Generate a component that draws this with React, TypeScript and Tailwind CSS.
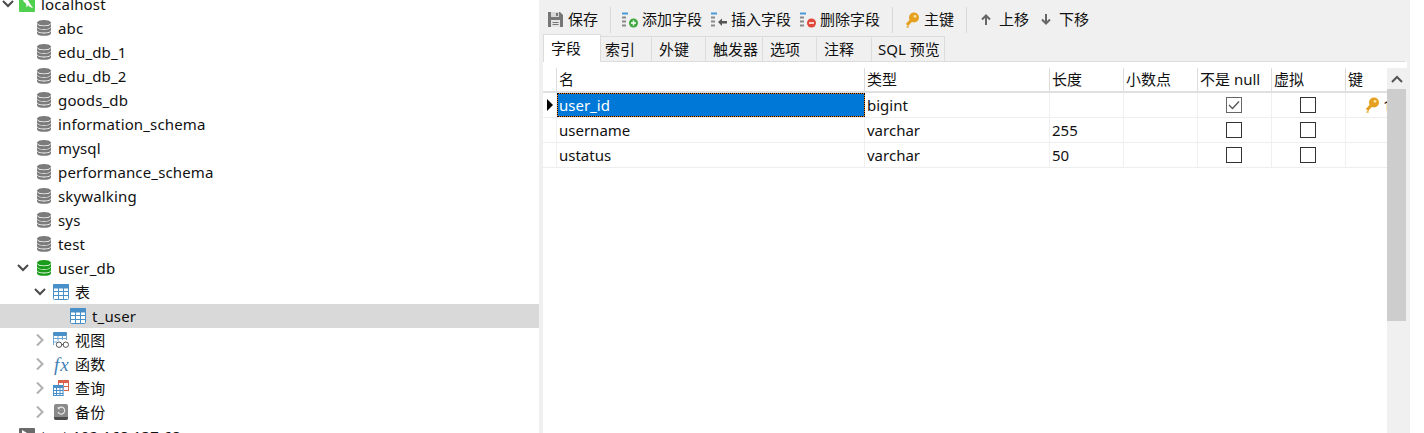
import type { ReactNode } from "react";

const font = "font-['Noto_Sans','Noto_Sans_CJK_SC',sans-serif]";

function Chevron({ open, dark }: { open?: boolean; dark?: boolean }) {
  return (
    <svg width="12" height="12" viewBox="0 0 12 12" fill="none" stroke={dark ? "#4a4a4a" : "#b0b0b0"} strokeWidth="2">
      {open ? <path d="M1 3l5 5 5-5" /> : <path d="M3 .5L8.500 6 3 11.500" />}
    </svg>
  );
}

function DbIcon({ color = "#7b7b7b" }: { color?: string }) {
  return (
    <svg width="16" height="16" viewBox="0 0 16 16" fill={color}>
      <ellipse cx="8" cy="2.800" rx="7" ry="2.800" />
      <path d="M1 3.800C2 5.600 4.500 6.300 8 6.300S14 5.600 15 3.800V6.400C15 8 12 9 8 9S1 8 1 6.400z" />
      <path d="M1 7.300C2 9.100 4.500 9.800 8 9.800S14 9.100 15 7.300V10C15 11.600 12 12.600 8 12.600S1 11.600 1 10z" />
      <path d="M1 10.900C2 12.700 4.500 13.400 8 13.400S14 12.700 15 10.900V13.200C15 14.800 12 15.800 8 15.800S1 14.800 1 13.200z" />
    </svg>
  );
}

function TableIcon() {
  return (
    <svg width="16" height="16" viewBox="0 0 16 16">
      <rect x="0.500" y="0.500" width="15" height="15" rx="1" fill="#fff" stroke="#4a90c8" />
      <rect x="0" y="0" width="16" height="4.500" rx="1" fill="#4a90c8" />
      <path d="M5.500 4v11M10.500 4v11M1 7.500h14M1 11.500h14" stroke="#4a90c8" fill="none" />
    </svg>
  );
}

function ViewIcon() {
  return (
    <svg width="16" height="16" viewBox="0 0 16 16">
      <rect x="0" y="0" width="14" height="4" rx="1" fill="#4a90c8" />
      <path d="M0.500 4v9M5 4v5M9.500 4v4M13.500 4v4M0 6.500h14M0 10h4" stroke="#6fa8d6" fill="none" />
      <circle cx="6" cy="12.700" r="2.700" fill="#fff" stroke="#555" />
      <circle cx="12.800" cy="12.700" r="2.700" fill="#fff" stroke="#555" />
      <path d="M8.500 12.500h2" stroke="#555" />
    </svg>
  );
}

function FxIcon() {
  return <span className="ml-px font-['Liberation_Serif',serif] text-[19px] leading-none tracking-[1px] text-[#3f7fb5] italic">fx</span>;
}

function QueryIcon() {
  return (
    <svg width="16" height="16" viewBox="0 0 16 16" fill="none">
      <rect x="5" y="0" width="11" height="3" fill="#d9634a" />
      <path d="M5.500 1v8M10.500 2v8M15.500 1v10M8 6.500h8M11 10.500h5" stroke="#d9634a" />
      <rect x="0" y="5" width="10.500" height="11" fill="#fff" />
      <rect x="0" y="5" width="10.500" height="3" fill="#4a90c8" />
      <path d="M0.500 6v10M3.500 7v9M7 7v9M10 6v10M0 10.500h10.500M0 13.500h10.500M0 15.500h10.500" stroke="#4a90c8" />
    </svg>
  );
}

function BackupIcon() {
  return (
    <svg width="14" height="16" viewBox="0 0 14 16" fill="none" className="ml-px">
      <rect x="0" y="0" width="14" height="16" rx="2" fill="#8a8a8a" />
      <path d="M0 13h14v1a2 2 0 0 1-2 2H2a2 2 0 0 1-2-2z" fill="#4d4d4d" />
      <path d="M4.200 4.800A3.500 3.500 0 1 1 4 8" stroke="#e8e8e8" strokeWidth="1.100" />
      <path d="M3 3.500h2.500V6z" fill="#e8e8e8" />
    </svg>
  );
}

function ServerIcon() {
  return (
    <svg width="16" height="16" viewBox="0 0 16 16">
      <rect width="16" height="16" rx="1" fill="#6a6a6a" />
      <path d="M3 2l5 3-5 3z" fill="#fff" />
    </svg>
  );
}

function ConnIcon() {
  return (
    <svg width="16" height="16" viewBox="0 0 16 16">
      <rect width="16" height="16" rx="1" fill="#4fd04f" />
      <path d="M3 1c3-.5 5 1 6.500 4 1 2 2.500 4 4.500 7-2.500-.5-4-1.500-5-3-.5 1.500-1 2-1.500 2.500C7.500 9 7 8 6.500 7 5 6.500 3.500 4 3 1z" fill="#fff" />
    </svg>
  );
}

type Row = { label: string; indent: string; icon: ReactNode; chevron?: "open" | "closed"; selected?: boolean };

const closedChevron = "closed" as const;
const dbNames = ["abc", "edu_db_1", "edu_db_2", "goods_db", "information_schema", "mysql", "performance_schema", "skywalking", "sys", "test"];

const treeRows: Row[] = [
  { label: "localhost", indent: "pl-0", icon: <ConnIcon />, chevron: "open" },
  ...dbNames.map((label) => ({ label, indent: "pl-[17px]", icon: <DbIcon /> })),
  { label: "user_db", indent: "pl-[17px]", icon: <DbIcon color="#1a9c1a" />, chevron: "open" },
  { label: "表", indent: "pl-[34px]", icon: <TableIcon />, chevron: "open" },
  { label: "t_user", indent: "pl-[51px]", icon: <TableIcon />, selected: true },
  { label: "视图", indent: "pl-[34px]", icon: <ViewIcon />, chevron: closedChevron },
  { label: "函数", indent: "pl-[34px]", icon: <FxIcon />, chevron: closedChevron },
  { label: "查询", indent: "pl-[34px]", icon: <QueryIcon />, chevron: closedChevron },
  { label: "备份", indent: "pl-[34px]", icon: <BackupIcon />, chevron: closedChevron },
  { label: "test 192.168.137.68", indent: "pl-0", icon: <ServerIcon /> },
];

function TreeRow({ row }: { row: Row }) {
  return (
    <div className={`flex h-6 shrink-0 items-center ${row.indent} ${row.selected ? "bg-[#d9d9d9]" : ""}`}>
      <span className={`flex w-[19px] shrink-0 justify-start ${row.indent === "pl-0" ? "pl-[2px]" : ""}`}>
        {row.chevron && <Chevron open={row.chevron === "open"} dark={row.chevron === "open"} />}
      </span>
      <span className="flex w-[22px] shrink-0 items-center justify-start">{row.icon}</span>
      <span className="whitespace-nowrap">{row.label}</span>
    </div>
  );
}

function ListIcon({ badge }: { badge: ReactNode }) {
  return (
    <svg width="16" height="16" viewBox="0 0 16 16" fill="none">
      <path d="M0 1.500h6" stroke="#4a9ad9" strokeWidth="2" />
      <path d="M0 5.500h4M0 9.500h4M0 13.500h4" stroke="#8a8a8a" strokeWidth="2" />
      {badge}
    </svg>
  );
}

const addIcon = (
  <ListIcon
    badge={
      <>
        <circle cx="11.500" cy="11" r="4.500" fill="#3fa83f" />
        <path d="M9 11h5M11.500 8.500v5" stroke="#fff" strokeWidth="1.500" />
      </>
    }
  />
);
const insertIcon = <ListIcon badge={<path d="M7 10l4-3.500V9h5v2.500h-5V14z" fill="#555" />} />;
const deleteIcon = (
  <ListIcon
    badge={
      <>
        <circle cx="11.500" cy="11" r="4.500" fill="#e2483a" />
        <path d="M9 11h5" stroke="#fff" strokeWidth="1.500" />
      </>
    }
  />
);

function KeyIcon() {
  return (
    <svg width="14" height="16" viewBox="0 0 14 16" fill="none">
      <path d="M6.500 8L2 13" stroke="#e6a020" strokeWidth="3.200" />
      <path d="M1 15.500l2.500.2V13z" fill="#e6a020" />
      <circle cx="9" cy="5.500" r="5" fill="#e6a020" />
      <circle cx="10" cy="4.300" r="1.400" fill="#fbe3a8" />
    </svg>
  );
}

function SaveIcon() {
  return (
    <svg width="15" height="15" viewBox="0 0 15 15">
      <path d="M0 0h12l3 3v12H0z" fill="#767676" />
      <rect x="3" y="0" width="8" height="5" fill="#d8d8d8" />
      <rect x="8" y="1" width="2" height="3" fill="#767676" />
      <rect x="3" y="8" width="9" height="7" fill="#e4e4e4" />
      <path d="M4.500 10.500h6M4.500 12.500h6" stroke="#767676" />
    </svg>
  );
}

function ArrowIcon({ down }: { down?: boolean }) {
  return (
    <svg width="10" height="11" viewBox="0 0 10 11" fill="none" stroke="#666" strokeWidth="2" className={down ? "rotate-180" : ""}>
      <path d="M5 11V2M1 5.500l4-4 4 4" />
    </svg>
  );
}

function Sep() {
  return <div className="h-[26px] w-px bg-[#d9d9d9]" />;
}

function Tool({ icon, label, className }: { icon: ReactNode; label: string; className?: string }) {
  return (
    <div className={`flex items-center whitespace-nowrap ${className ?? ""}`}>
      {icon}
      <span>{label}</span>
    </div>
  );
}

const tabs = [
  { label: "索引", w: "w-[51px] pl-1" },
  { label: "外键", w: "w-[54px] pl-[7px]" },
  { label: "触发器", w: "w-[57px] pl-[7px]" },
  { label: "选项", w: "w-[54px] pl-[7px]" },
  { label: "注释", w: "w-[55px] pl-[7px]" },
  { label: "SQL 预览", w: "w-[73px] pl-[6px]" },
];

const cols = "grid grid-cols-[14px_308px_185px_74px_74px_74px_74px_41px]";
const headers = ["名", "类型", "长度", "小数点", "不是 null", "虚拟", "键"];

function Box({ checked }: { checked?: boolean }) {
  return (
    <div className={`flex h-4 w-4 items-center justify-center border ${checked ? "border-[#666]" : "border-[#333]"}`}>
      {checked && (
        <svg width="12" height="10" viewBox="0 0 12 10" fill="none" stroke="#555" strokeWidth="1.300">
          <path d="M1 5l3.500 3.500L11 1.500" />
        </svg>
      )}
    </div>
  );
}

const fields = [
  { name: "user_id", type: "bigint", len: "", notNull: true, key: true },
  { name: "username", type: "varchar", len: "255" },
  { name: "ustatus", type: "varchar", len: "50" },
];

const cell = "flex items-center overflow-hidden border-r border-[#f0f0f0] pl-[2px]";

export default function App() {
  return (
    <div className={`flex h-[433px] w-[1424px] overflow-hidden bg-white text-[15px] leading-none text-[#111] ${font}`}>
      <div className="-mt-2 flex w-[539px] shrink-0 flex-col overflow-hidden tracking-[0.15px]">
        {treeRows.map((row) => (
          <TreeRow key={row.label} row={row} />
        ))}
      </div>

      <div className="flex w-[871px] shrink-0 flex-col bg-[#f0f0f0]">
        <div className="flex h-[34px] shrink-0 items-center pt-[5px]">
          <Tool icon={<SaveIcon />} label="保存" className="ml-[9px] gap-[5px]" />
          <div className="ml-3"><Sep /></div>
          <Tool icon={addIcon} label="添加字段" className="ml-[11px] gap-1" />
          <Tool icon={insertIcon} label="插入字段" className="ml-[9px] gap-1" />
          <Tool icon={deleteIcon} label="删除字段" className="ml-[9px] gap-1" />
          <div className="ml-3"><Sep /></div>
          <Tool icon={<KeyIcon />} label="主键" className="ml-3 gap-[5px]" />
          <div className="ml-3"><Sep /></div>
          <Tool icon={<ArrowIcon />} label="上移" className="ml-[14px] gap-2" />
          <Tool icon={<ArrowIcon down />} label="下移" className="ml-3 gap-2" />
        </div>

        <div className="mr-[5px] ml-1 flex h-[28px] shrink-0 items-stretch border-b border-[#dcdcdc]">
          <div className="-mb-px flex w-[58px] items-start border border-b-0 border-[#dcdcdc] bg-white pt-[6px] pl-[7px]">字段</div>
          {tabs.map((t) => (
            <div key={t.label} className={`${t.w} mt-[2px] flex items-center border-t border-r border-[#dcdcdc] pt-px whitespace-nowrap`}>
              {t.label}
            </div>
          ))}
        </div>

        <div className="ml-1 flex min-h-0 flex-1">
          <div className="w-[844px] bg-white pt-[6px]">
            <div className={`${cols} h-[25px] border-b-2 border-[#e0e0e0]`}>
              <div className="border-r border-[#dcdcdc]" />
              {headers.map((h) => (
                <div key={h} className="flex items-center overflow-hidden border-r border-[#dcdcdc] pl-[2px] whitespace-nowrap last:border-r-0">
                  {h}
                </div>
              ))}
            </div>
            {fields.map((f, i) => (
              <div key={f.name} className={`${cols} h-[25px] border-b border-[#eeeeee]`}>
                <div className="flex items-center border-r border-[#f0f0f0] pl-1">
                  {i === 0 && <div className="h-0 w-0 border-y-[6px] border-l-[6px] border-y-transparent border-l-black" />}
                </div>
                {i === 0 ? (
                  <div className="bg-[#e8801a]">
                    <div className="flex h-full items-center border border-dotted border-black bg-[#0078d7] bg-clip-padding pl-px text-white">{f.name}</div>
                  </div>
                ) : (
                  <div className={cell}>{f.name}</div>
                )}
                <div className={cell}>{f.type}</div>
                <div className={cell}>{f.len}</div>
                <div className={cell} />
                <div className="flex items-center justify-center border-r border-[#f0f0f0] pr-px">
                  <Box checked={f.notNull} />
                </div>
                <div className="flex items-center justify-center border-r border-[#f0f0f0] pr-px">
                  <Box />
                </div>
                <div className="flex items-center overflow-hidden pl-[19px]">
                  {f.key && (
                    <>
                      <span className="shrink-0"><KeyIcon /></span>
                      <span className="ml-1">1</span>
                    </>
                  )}
                </div>
              </div>
            ))}
          </div>

          <div className="flex w-[23px] shrink-0 flex-col">
            <div className="h-[6px] w-5 bg-white" />
            <div className="flex h-[21px] w-5 items-center justify-center">
              <svg width="12" height="8" viewBox="0 0 12 8" fill="none" stroke="#555" strokeWidth="2">
                <path d="M1 7l5-5 5 5" />
              </svg>
            </div>
            <div className="h-[232px] w-[19px] bg-[#cdcdcd]" />
          </div>
        </div>
      </div>
    </div>
  );
}
